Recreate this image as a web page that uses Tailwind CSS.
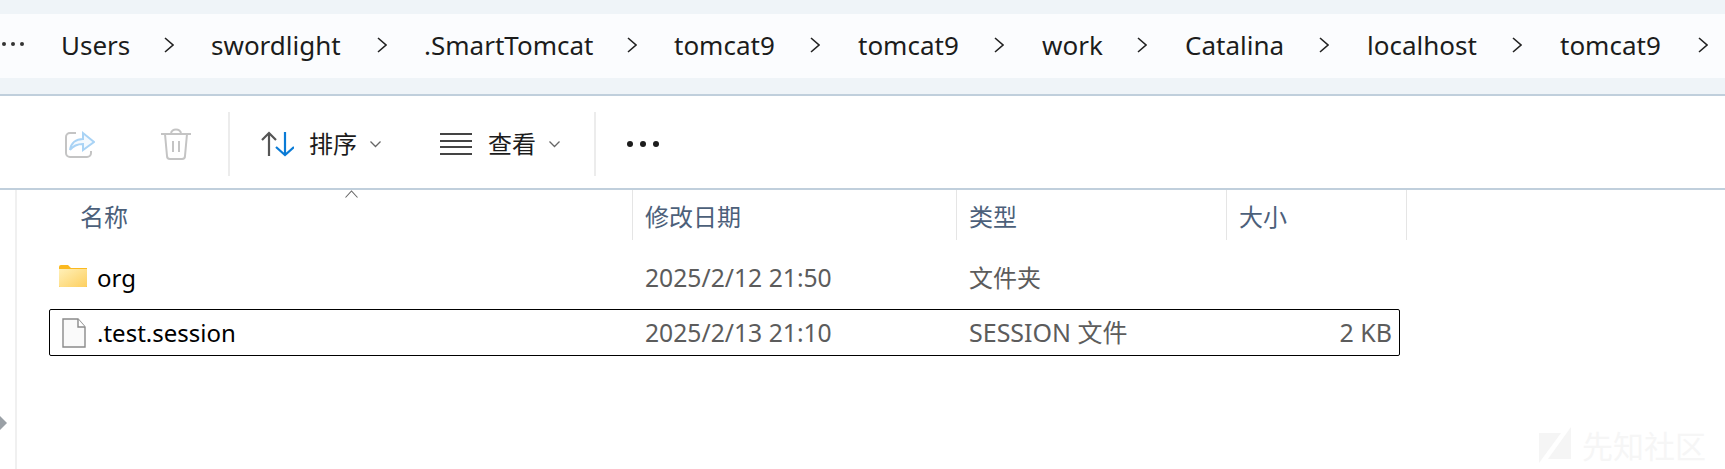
<!DOCTYPE html>
<html lang="zh-CN">
<head>
    <meta charset="UTF-8">
    <title>tomcat9</title>
    <script src="https://cdn.jsdelivr.net/npm/@tailwindcss/browser@4"></script>
</head>
<body class="bg-white overflow-hidden font-['Noto_Sans','Noto_Sans_CJK_SC',sans-serif]">
<div class="relative w-[1725px] h-[469px] overflow-hidden bg-white">

    <!-- 地址栏 -->
    <div class="h-[96px] pt-[14px] bg-[#eff4f8] border-b-2 border-[#c0cfdc]">
        <div class="h-[64px] pb-[2px] bg-[#fbfcfe] flex items-center text-[26px] text-[#1c1c1c]">
            <div class="w-[61px] pl-[2px] flex gap-[5px] -mt-[2px]">
                <span class="w-[4px] h-[4px] rounded-full bg-[#333]"></span>
                <span class="w-[4px] h-[4px] rounded-full bg-[#333]"></span>
                <span class="w-[4px] h-[4px] rounded-full bg-[#333]"></span>
            </div>
            <span class="w-[103px]">Users</span>
            <svg class="w-[10px] h-[16px] mr-[37px]" viewBox="0 0 10 16" fill="none" stroke="#222" stroke-width="1.6"><path d="M1 1l8 7-8 7"/></svg>
            <span class="w-[166px]">swordlight</span>
            <svg class="w-[10px] h-[16px] mr-[37px]" viewBox="0 0 10 16" fill="none" stroke="#222" stroke-width="1.6"><path d="M1 1l8 7-8 7"/></svg>
            <span class="w-[203px]">.SmartTomcat</span>
            <svg class="w-[10px] h-[16px] mr-[37px]" viewBox="0 0 10 16" fill="none" stroke="#222" stroke-width="1.6"><path d="M1 1l8 7-8 7"/></svg>
            <span class="w-[136px]">tomcat9</span>
            <svg class="w-[10px] h-[16px] mr-[38px]" viewBox="0 0 10 16" fill="none" stroke="#222" stroke-width="1.6"><path d="M1 1l8 7-8 7"/></svg>
            <span class="w-[136px]">tomcat9</span>
            <svg class="w-[10px] h-[16px] mr-[38px]" viewBox="0 0 10 16" fill="none" stroke="#222" stroke-width="1.6"><path d="M1 1l8 7-8 7"/></svg>
            <span class="w-[95px]">work</span>
            <svg class="w-[10px] h-[16px] mr-[38px]" viewBox="0 0 10 16" fill="none" stroke="#222" stroke-width="1.6"><path d="M1 1l8 7-8 7"/></svg>
            <span class="w-[134px]">Catalina</span>
            <svg class="w-[10px] h-[16px] mr-[38px]" viewBox="0 0 10 16" fill="none" stroke="#222" stroke-width="1.6"><path d="M1 1l8 7-8 7"/></svg>
            <span class="w-[145px]">localhost</span>
            <svg class="w-[10px] h-[16px] mr-[38px]" viewBox="0 0 10 16" fill="none" stroke="#222" stroke-width="1.6"><path d="M1 1l8 7-8 7"/></svg>
            <span class="w-[138px]">tomcat9</span>
            <svg class="w-[10px] h-[16px]" viewBox="0 0 10 16" fill="none" stroke="#222" stroke-width="1.6"><path d="M1 1l8 7-8 7"/></svg>
        </div>
    </div>

    <!-- 工具栏 -->
    <div class="h-[94px] pt-[4px] border-b-2 border-[#c0cfdc] flex items-center text-[24px] text-[#1c1c1c]">
        <div class="w-[228px] pl-[65px] flex items-center gap-[66px]">
            <svg class="w-[30px] h-[28px]" viewBox="0 0 30 28" fill="none" stroke-width="2">
                <path d="M11 3H5a4 4 0 0 0-4 4v16a4 4 0 0 0 4 4h17a4 4 0 0 0 4-4v-2" stroke="#c4c4c4"/>
                <path d="M5 20c1-7 6-11 13-11V3l11 9-11 8v-6c-6 0-10 2-13 6z" stroke="#a9d3f5" fill="#f4f9fe"/>
            </svg>
            <svg class="w-[30px] h-[32px]" viewBox="0 0 30 32" fill="none" stroke="#c4c4c4" stroke-width="2">
                <path d="M0 6h30M10 6c0-6 10-6 10 0M4 6l2 22a3 3 0 0 0 3 3h12a3 3 0 0 0 3-3l2-22M12 13v11M18 13v11"/>
            </svg>
        </div>
        <div class="w-[2px] h-[64px] bg-[#ececec]"></div>
        <div class="w-[364px] flex items-center">
            <svg class="ml-[31px] w-[33px] h-[26px]" viewBox="0 0 33 26" fill="none" stroke-width="2.2">
                <path d="M8 25V2M1 9l7-7 7 7" stroke="#555"/>
                <path d="M24 1v23M15 16l9 8 9-8" stroke="#0a7bd6"/>
            </svg>
            <span class="ml-[15px] w-[61px]">排序</span>
            <svg class="w-[11px] h-[7px]" viewBox="0 0 11 7" fill="none" stroke="#666" stroke-width="1.3"><path d="M.5.5l5 5 5-5"/></svg>
            <div class="ml-[59px] w-[32px] flex flex-col gap-[4.5px]">
                <div class="h-[2px] bg-[#444]"></div>
                <div class="h-[2px] bg-[#444]"></div>
                <div class="h-[2px] bg-[#444]"></div>
                <div class="h-[2px] bg-[#444]"></div>
            </div>
            <span class="ml-[16px] w-[61px]">查看</span>
            <svg class="w-[11px] h-[7px]" viewBox="0 0 11 7" fill="none" stroke="#666" stroke-width="1.3"><path d="M.5.5l5 5 5-5"/></svg>
        </div>
        <div class="w-[2px] h-[64px] bg-[#ececec]"></div>
        <div class="ml-[31px] flex gap-[7px]">
            <span class="w-[6px] h-[6px] rounded-full bg-[#1c1c1c]"></span>
            <span class="w-[6px] h-[6px] rounded-full bg-[#1c1c1c]"></span>
            <span class="w-[6px] h-[6px] rounded-full bg-[#1c1c1c]"></span>
        </div>
    </div>

    <!-- 文件列表 -->
    <div class="flex h-[279px]">
        <div class="w-[17px] border-r-2 border-[#f0f0f0]"></div>
        <div class="flex-1">
            <div class="h-[56px] flex items-start text-[24px] text-[#4c607a]">
                <div class="w-[616px] pl-[63px] h-[50px] pt-[10px] leading-[34px] border-r border-[#e5e5e5]">名称</div>
                <div class="w-[324px] pl-[12px] h-[50px] pt-[10px] leading-[34px] border-r border-[#e5e5e5]">修改日期</div>
                <div class="w-[270px] pl-[12px] h-[50px] pt-[10px] leading-[34px] border-r border-[#e5e5e5]">类型</div>
                <div class="w-[180px] pl-[12px] h-[50px] pt-[10px] leading-[34px] border-r border-[#e5e5e5]">大小</div>
            </div>
            <div class="ml-[32px] w-[1351px] h-[47px] flex items-center text-[25px] text-[#5c5c5c] mt-[8px]">
                <svg class="ml-[10px] w-[28px] h-[22px] -mt-[4px]" viewBox="0 0 28 22">
                    <defs><linearGradient id="f" x1="0" y1="0" x2="1" y2="1"><stop offset="0" stop-color="#fff0b8"/><stop offset="1" stop-color="#fdcf5f"/></linearGradient></defs>
                    <path d="M0 2a2 2 0 0 1 2-2h7l3 3h16v19H0z" fill="#fbb91f"/>
                    <path d="M0 4h28v17a1 1 0 0 1-1 1H1a1 1 0 0 1-1-1z" fill="url(#f)"/>
                </svg>
                <span class="ml-[10px] w-[548px] text-[24px] text-black">org</span>
                <span class="w-[324px] text-[24.7px]">2025/2/12 21:50</span>
                <span class="text-[24px]">文件夹</span>
            </div>
            <div class="ml-[32px] w-[1351px] h-[47px] flex items-center text-[25px] text-[#5c5c5c] border border-black rounded-[2px] mt-[8px]">
                <svg class="ml-[12px] w-[24px] h-[30px]" viewBox="0 0 24 30" fill="#fafafa" stroke="#8a8a8a" stroke-width="1.4">
                    <path d="M1 1h15l7 8v20H1z"/><path d="M16 1v8h7" fill="#fff"/>
                </svg>
                <span class="ml-[11px] w-[548px] text-[24px] text-black">.test.session</span>
                <span class="w-[324px] text-[24.7px]">2025/2/13 21:10</span>
                <span>SESSION 文件</span>
                <span class="ml-auto mr-[7px]">2 KB</span>
            </div>
        </div>
    </div>

    <!-- 排序箭头 -->
    <svg class="absolute left-[345px] top-[190px] w-[13px] h-[8px]" viewBox="0 0 13 8" fill="none" stroke="#666" stroke-width="1.1"><path d="M.5 7.5l6-6.5 6 6.5"/></svg>
    <!-- 侧栏展开箭头 -->
    <div class="absolute left-0 top-[416px] w-[7px] h-[14px] bg-[#9aa0a6] [clip-path:polygon(0_0,100%_50%,0_100%)]"></div>

    <!-- 水印 -->
    <div class="absolute left-[1539px] top-[427px] flex items-center gap-[10px] text-[31px] leading-none text-[#f6f6f6]">
        <svg class="w-[33px] h-[38px]" viewBox="0 0 33 38" fill="#f5f5f5"><path d="M0 6h22L0 36zM32 0v32H9z"/></svg>
        <span>先知社区</span>
    </div>
</div>
</body>
</html>
